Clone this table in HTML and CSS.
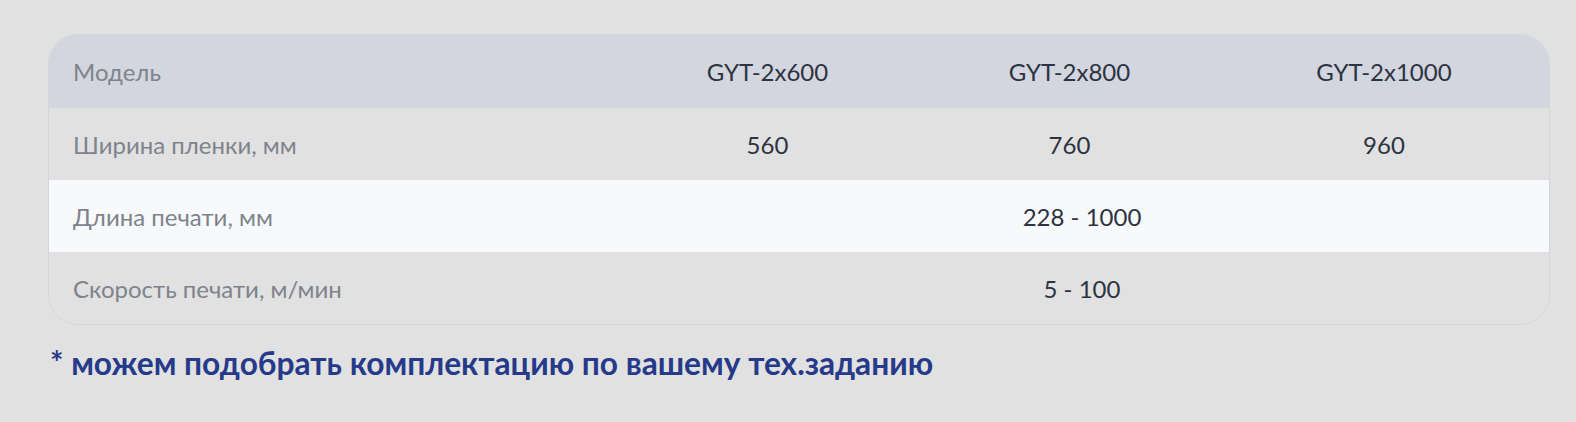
FILE: index.html
```html
<!DOCTYPE html>
<html lang="ru">
<head>
<meta charset="utf-8">
<title>Характеристики</title>
<link rel="stylesheet" href="styles.css">
</head>
<body>
<div class="page">
  <div class="spec">
    <table class="spec-table">
      <colgroup>
        <col class="c-label">
        <col class="c-a">
        <col class="c-b">
        <col class="c-c">
      </colgroup>
      <thead>
        <tr class="row-head">
          <th class="label">Модель</th>
          <th class="val">GYT-2x600</th>
          <th class="val">GYT-2x800</th>
          <th class="val">GYT-2x1000</th>
        </tr>
      </thead>
      <tbody>
        <tr class="row">
          <td class="label">Ширина пленки, мм</td>
          <td class="val">560</td>
          <td class="val">760</td>
          <td class="val">960</td>
        </tr>
        <tr class="row row-light">
          <td class="label">Длина печати, мм</td>
          <td class="val" colspan="3">228 - 1000</td>
        </tr>
        <tr class="row">
          <td class="label">Скорость печати, м/мин</td>
          <td class="val" colspan="3">5 - 100</td>
        </tr>
      </tbody>
    </table>
  </div>
  <p class="note">* можем подобрать комплектацию по вашему тех.заданию</p>
</div>
</body>
</html>
```
FILE: styles.css
```css
html, body {
  margin: 0;
  padding: 0;
  background: #e1e1e1;
}
body {
  font-family: Lato, "Noto Sans", sans-serif;
}
.page {
  padding: 34px 26px 0 48px;
}
.spec {
  width: 1500px;
  border: 1px solid #d3d6de;
  border-radius: 30px;
  overflow: hidden;
  background: #e1e1e1;
}
.spec-table {
  width: 100%;
  border-collapse: collapse;
  table-layout: fixed;
}
.c-label { width: 566px; }
.c-a { width: 305px; }
.c-b { width: 299px; }
.c-c { width: 330px; }
.row-head {
  background: #d3d6de;
  height: 73px;
}
.row {
  height: 72px;
  background: #e1e1e1;
}
.row-light {
  background: #f8f9fb;
}
.spec-table th,
.spec-table td {
  padding: 0;
  font-size: 24px;
  font-weight: 400;
  vertical-align: middle;
}
.label {
  text-align: left;
  padding-left: 24px !important;
  color: #7e838c;
}
.val {
  text-align: center;
  color: #2c3342;
}
.note {
  margin: 19px 0 0 2px;
  font-size: 31.7px;
  font-weight: 700;
  color: #263a8a;
  line-height: 1.2;
  white-space: nowrap;
}
```
